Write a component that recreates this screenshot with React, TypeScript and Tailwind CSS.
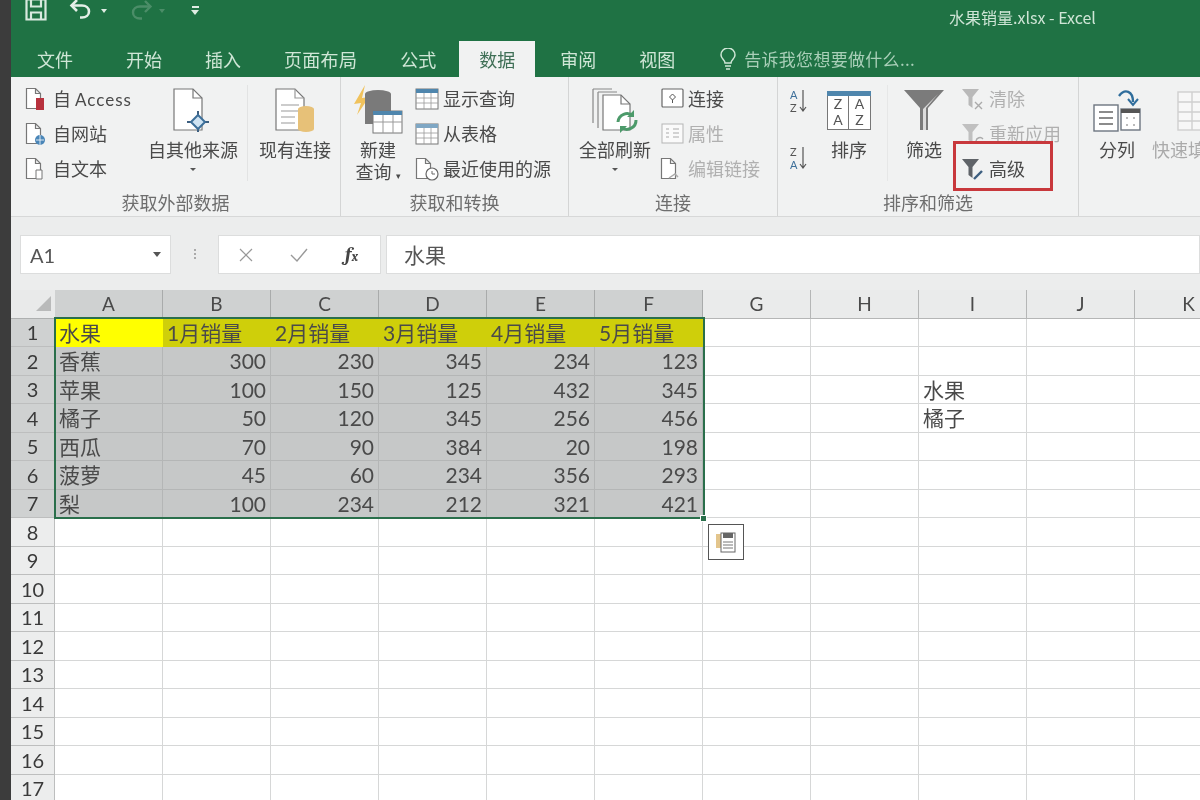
import React from "react";

const CJK = '"Noto Sans CJK SC", sans-serif';
const LATIN = 'Lato, "Noto Sans CJK SC", sans-serif';

const COLS = ["A", "B", "C", "D", "E", "F", "G", "H", "I", "J", "K"];
const TABLE: (string | number)[][] = [
  ["水果", "1月销量", "2月销量", "3月销量", "4月销量", "5月销量"],
  ["香蕉", 300, 230, 345, 234, 123],
  ["苹果", 100, 150, 125, 432, 345],
  ["橘子", 50, 120, 345, 256, 456],
  ["西瓜", 70, 90, 384, 20, 198],
  ["菠萝", 45, 60, 234, 356, 293],
  ["梨", 100, 234, 212, 321, 421],
];
const ROWS = Array.from({ length: 17 }, (_, i) => i + 1);
// criteria range over in column I
const CRITERIA: Record<number, string> = { 3: "水果", 4: "橘子" };

const DOC = "M1.5 1.5h9l5 5v15h-14z M10.5 1.5v5h5";

function DocIcon({ children }: { children?: React.ReactNode }) {
  return (
    <svg width="24" height="24" viewBox="0 0 24 24" fill="none">
      <path d={DOC} fill="#fff" stroke="#777" strokeWidth="1.2" />
      {children}
    </svg>
  );
}

function TableIcon({ fill }: { fill: string }) {
  return (
    <svg width="24" height="24" viewBox="0 0 24 24" fill="none">
      <rect x="1" y="2" width="22" height="20" fill="#fff" stroke="#777" />
      <rect x="1" y="2" width="22" height="4" fill={fill} />
      <path d="M1 11h22M1 16h22M9 6v16M16 6v16" stroke="#999" strokeWidth="0.8" />
    </svg>
  );
}

function SmallFunnel({ color, children }: { color: string; children?: React.ReactNode }) {
  return (
    <svg width="24" height="24" viewBox="0 0 24 24" fill="none">
      <path d="M1 2h17l-6.5 8v11l-4-3v-8z" fill={color} />
      {children}
    </svg>
  );
}

function SmallItem({
  icon,
  muted,
  children,
}: {
  icon: React.ReactNode;
  muted?: boolean;
  children: React.ReactNode;
}) {
  return (
    <div className={`flex h-[35px] items-center gap-1 text-[18px] whitespace-nowrap ${muted ? "text-[#b0b0b0]" : "text-[#4a4a4a]"}`}>
      <span className="flex w-6 shrink-0 justify-center">{icon}</span>
      {children}
    </div>
  );
}

function BigButton({
  icon,
  lines,
  caret,
  className = "",
}: {
  icon: React.ReactNode;
  lines: React.ReactNode[];
  caret?: boolean;
  className?: string;
}) {
  return (
    <div className={`flex shrink-0 flex-col items-center text-[18px] leading-[22px] whitespace-nowrap text-[#4a4a4a] ${className}`}>
      <div className="flex h-[56px] items-center justify-center">{icon}</div>
      {lines.map((l, i) => (
        <div key={i}>{l}</div>
      ))}
      {caret && <div className="mt-2 h-0 w-0 border-x-[3px] border-t-[3px] border-x-transparent border-t-[#555]" />}
    </div>
  );
}

function Group({ label, width, children }: { label: string; width: string; children: React.ReactNode }) {
  return (
    <div className={`flex shrink-0 flex-col border-r border-[#d4d5d5] ${width}`}>
      <div className="flex h-[112px] overflow-hidden pt-[5px]">{children}</div>
      <div className="flex h-[28px] items-center justify-center text-[18px] text-[#6e6e6e]">{label}</div>
    </div>
  );
}

function TitleBar() {
  return (
    <div className="relative flex h-[41px] items-start">
      <svg className="ml-[14px] -mt-[2px]" width="22" height="23" viewBox="0 0 22 23" fill="none" stroke="#d9eadf" strokeWidth="2.2">
        <path d="M1.5 1.5h19v20h-19z" />
        <path d="M6 1.5v7h10v-7M6 21.5v-7h10v7" />
      </svg>
      <svg className="ml-[22px] -mt-[1px]" width="24" height="22" viewBox="0 0 24 22" fill="none" stroke="#e4efe7" strokeWidth="2.6">
        <path d="M8 1 2.5 6.5 8 12" />
        <path d="M3 6.5h10c4 0 7 2.5 7 6s-3 6-7 6h-2" />
      </svg>
      <div className="mt-[9px] ml-[8px] h-0 w-0 border-x-[3px] border-t-[4px] border-x-transparent border-t-[#dfece3]" />
      <svg className="ml-[22px] mt-0" width="24" height="22" viewBox="0 0 24 22" fill="none" stroke="#4b8d68" strokeWidth="2.4">
        <path d="M16 1l5.5 5.5L16 12" />
        <path d="M21 6.5H11c-4 0-7 2.5-7 6s3 6 7 6h2" />
      </svg>
      <div className="mt-[9px] ml-[6px] h-0 w-0 border-x-[3px] border-t-[4px] border-x-transparent border-t-[#4b8d68]" />
      <div className="mt-[6px] ml-[26px] flex flex-col items-center gap-[2px]">
        <div className="h-[2px] w-[7px] bg-[#dfece3]" />
        <div className="h-0 w-0 border-x-[4px] border-t-[5px] border-x-transparent border-t-[#dfece3]" />
      </div>
      <div className="absolute top-[6px] left-[938px] text-[16px] leading-[22px] whitespace-nowrap text-[#cfe5d6]">
        水果销量.xlsx - Excel
      </div>
    </div>
  );
}

function Tabs() {
  return (
    <div className="flex h-[36px] items-center gap-[43px] pl-[26px] text-[18px] text-[#cfe6d6]">
      <span>文件</span>
      <span className="ml-[10px]">开始</span>
      <span>插入</span>
      <span className="tracking-[0.3px]">页面布局</span>
      <span>公式</span>
      <span className="-mx-5 flex h-[36px] items-center bg-[#f1f2f2] px-5 text-[#3f6f56]">数据</span>
      <span className="ml-[2px]">审阅</span>
      <span>视图</span>
      <span className="ml-[2px] flex items-center gap-2 text-[17px] tracking-[0.3px] text-[#a9cfb8]">
        <svg width="16" height="22" viewBox="0 0 16 22" fill="none" stroke="#cfe6d6" strokeWidth="1.5">
          <path d="M5 15c0-3-4-4-4-8a7 7 0 0 1 14 0c0 4-4 5-4 8z" />
          <path d="M5 18h6M6 21h4" />
        </svg>
        告诉我您想要做什么...
      </span>
    </div>
  );
}

function Ribbon() {
  return (
    <div className="relative flex h-[140px] border-b border-[#d7d8d8] bg-[#f1f2f2] text-[#4a4a4a]">
      <Group label="获取外部数据" width="w-[330px]">
        <div className="-mt-[1px] ml-[14px] w-[123px] shrink-0">
          <SmallItem
            icon={
              <DocIcon>
                <rect x="11" y="11" width="8" height="12" fill="#b8323e" />
              </DocIcon>
            }
          >
            <span>自 <span className="text-[17px] tracking-[1px]" style={{ fontFamily: LATIN }}>Access</span></span>
          </SmallItem>
          <SmallItem
            icon={
              <DocIcon>
                <circle cx="15" cy="18" r="5" fill="#4a86b8" />
                <path d="M11 18h8M15 13v10" stroke="#fff" strokeWidth="0.8" />
              </DocIcon>
            }
          >
            自网站
          </SmallItem>
          <SmallItem
            icon={
              <DocIcon>
                <path d="M11 13h6v9h-6z" fill="#fff" stroke="#777" />
              </DocIcon>
            }
          >
            自文本
          </SmallItem>
        </div>
        <BigButton
          className="w-[90px]"
          caret
          lines={["自其他来源"]}
          icon={
            <svg width="46" height="46" viewBox="0 0 46 46" fill="none">
              <path d="M4 2h19l9 9v32H4z" fill="#fff" stroke="#777" strokeWidth="1.2" />
              <path d="M23 2v9h9" stroke="#777" strokeWidth="1.2" />
              <path d="M28 24v5M28 41v4M21 35h-4M39 35h-4" stroke="#3d5f80" strokeWidth="2" />
              <path d="M28 28l7 7-7 7-7-7z" fill="#cfe3f2" stroke="#3d6f99" strokeWidth="2" />
            </svg>
          }
        />
        <div className="mt-[3px] ml-[9px] h-[96px] w-px bg-[#e2e3e3]" />
        <BigButton
          className="ml-[11px] w-[72px]"
          lines={["现有连接"]}
          icon={
            <svg width="46" height="46" viewBox="0 0 46 46" fill="none">
              <path d="M4 2h19l9 9v32H4z" fill="#fff" stroke="#777" strokeWidth="1.2" />
              <path d="M23 2v9h9M9 18h18M9 24h18M9 30h14M9 36h14" stroke="#999" strokeWidth="1.2" />
              <path d="M26 22a8 3 0 0 1 16 0v20a8 3 0 0 1-16 0z" fill="#e7c178" />
            </svg>
          }
        />
      </Group>

      <Group label="获取和转换" width="w-[228px]">
        <BigButton
          className="ml-[11px] w-[52px]"
          lines={["新建", <span className="whitespace-nowrap">查询 <span className="text-[9px]">▾</span></span>]}
          icon={
            <svg width="52" height="52" viewBox="0 0 52 52" fill="none">
              <path d="M13 1 2 20l7-1-4 12 12-18-7 1z" fill="#f0c25c" />
              <path d="M13 10a13 4 0 0 1 26 0v30H13z" fill="#7a7a7a" />
              <rect x="21" y="27" width="29" height="22" fill="#fff" stroke="#777" />
              <rect x="21" y="27" width="29" height="4" fill="#4f86ad" />
              <path d="M21 38h29M31 31v18M41 31v18" stroke="#999" />
            </svg>
          }
        />
        <div className="-mt-[1px] ml-[11px] shrink-0">
          <SmallItem icon={<TableIcon fill="#4f86ad" />}>显示查询</SmallItem>
          <SmallItem icon={<TableIcon fill="#7fa7c4" />}>从表格</SmallItem>
          <SmallItem
            icon={
              <DocIcon>
                <circle cx="17" cy="17" r="6" fill="#fff" stroke="#666" strokeWidth="1.2" />
                <path d="M17 14v3h3" stroke="#666" />
              </DocIcon>
            }
          >
            最近使用的源
          </SmallItem>
        </div>
      </Group>

      <Group label="连接" width="w-[209px]">
        <BigButton
          className="ml-[10px] w-[72px]"
          caret
          lines={["全部刷新"]}
          icon={
            <svg width="48" height="48" viewBox="0 0 48 48" fill="none">
              <path d="M2 3h19M2 3v34M7 6h19M7 6v36" stroke="#888" strokeWidth="1.2" />
              <path d="M12 9h18l9 9v26H12z" fill="#fff" stroke="#777" strokeWidth="1.2" />
              <path d="M30 9v9h9" stroke="#777" strokeWidth="1.2" />
              <path d="M27 36a9 9 0 0 1 15-6M45 34a9 9 0 0 1-15 7" stroke="#4c9a6a" strokeWidth="3" />
              <path d="M43 24v7h-7M29 47v-7h7" fill="#4c9a6a" />
            </svg>
          }
        />
        <div className="-mt-[1px] ml-[9px] shrink-0">
          <SmallItem
            icon={
              <svg width="23" height="21" viewBox="0 0 23 21" fill="none">
                <rect x="1" y="1" width="21" height="18" rx="1" fill="#fff" stroke="#666" strokeWidth="1.2" />
                <path d="M11.5 6l3 3-3 3-3-3zM11.5 12v3" stroke="#555" />
              </svg>
            }
          >
            连接
          </SmallItem>
          <SmallItem
            muted
            icon={
              <svg width="23" height="21" viewBox="0 0 23 21" fill="none">
                <rect x="1" y="1" width="21" height="19" fill="#fafafa" stroke="#b5b5b5" />
                <path d="M5 6h3M5 10h3M5 14h3M12 6h6M12 10h6M12 14h6" stroke="#aaa" />
              </svg>
            }
          >
            属性
          </SmallItem>
          <SmallItem
            muted
            icon={
              <DocIcon>
                <path d="M9 21l6-4 3 3" stroke="#aaa" strokeWidth="1.5" />
              </DocIcon>
            }
          >
            编辑链接
          </SmallItem>
        </div>
      </Group>

      <Group label="排序和筛选" width="w-[301px]">
        <div className="ml-[12px] flex w-[24px] shrink-0 flex-col gap-[31px] pt-[6px]" style={{ fontFamily: LATIN }}>
          <div className="flex items-center gap-[2px]">
            <div className="flex flex-col text-[11px] leading-[13px] text-[#3d6f99]">
              <span>A</span>
              <span className="text-[#555]">Z</span>
            </div>
            <svg width="8" height="24" viewBox="0 0 8 24" fill="none" stroke="#555" strokeWidth="1.2">
              <path d="M4 1v21M1 18l3 4 3-4" />
            </svg>
          </div>
          <div className="flex items-center gap-[2px]">
            <div className="flex flex-col text-[11px] leading-[13px] text-[#555]">
              <span>Z</span>
              <span className="text-[#3d6f99]">A</span>
            </div>
            <svg width="8" height="24" viewBox="0 0 8 24" fill="none" stroke="#555" strokeWidth="1.2">
              <path d="M4 1v21M1 18l3 4 3-4" />
            </svg>
          </div>
        </div>
        <BigButton
          className="ml-[12px] w-[46px]"
          lines={["排序"]}
          icon={
            <div className="relative flex flex-col">
              <div className="h-[5px] w-[44px] bg-[#4f86ad]" />
              <div
                className="grid h-[34px] w-[44px] grid-cols-2 border border-t-0 border-[#777] bg-white text-center text-[14px] leading-[16px] text-[#555]"
                style={{ fontFamily: LATIN }}
              >
                <div className="border-r border-[#777]">Z<br />A</div>
                <div>A<br />Z</div>
              </div>
            </div>
          }
        />
        <div className="mt-[3px] ml-[15px] h-[96px] w-px bg-[#e6e7e7]" />
        <BigButton
          className="ml-[15px] w-[42px]"
          lines={["筛选"]}
          icon={
            <svg width="42" height="42" viewBox="0 0 42 42" fill="none">
              <path d="M1 1h40L25 19v22h-8V19z" fill="#7b7b7b" />
              <path d="M20 20v21h3V19l12-14z" fill="#dcdcdc" />
            </svg>
          }
        />
        <div className="-mt-[1px] ml-[16px] shrink-0">
          <SmallItem
            muted
            icon={
              <SmallFunnel color="#b9b9b9">
                <path d="M14 15l7 7M21 15l-7 7" stroke="#aaa" strokeWidth="1.4" />
              </SmallFunnel>
            }
          >
            清除
          </SmallItem>
          <SmallItem
            muted
            icon={
              <SmallFunnel color="#c0c0c0">
                <path d="M15 19a4 4 0 0 1 7-2" stroke="#aaa" strokeWidth="1.4" />
              </SmallFunnel>
            }
          >
            重新应用
          </SmallItem>
          <SmallItem
            icon={
              <SmallFunnel color="#5f6368">
                <path d="M13 22l8-8" stroke="#3d5f80" strokeWidth="2.4" />
              </SmallFunnel>
            }
          >
            高级
          </SmallItem>
        </div>
      </Group>

      <div className="flex min-w-0 flex-1 overflow-hidden pt-[5px]">
        <BigButton
          className="ml-[15px] w-[46px]"
          lines={["分列"]}
          icon={
            <svg width="48" height="44" viewBox="0 0 48 44" fill="none">
              <path d="M26 8c6-8 14-5 14 6" stroke="#2f6d9c" strokeWidth="2.4" />
              <path d="M35 11l5 6 5-6" stroke="#2f6d9c" strokeWidth="2" />
              <rect x="1" y="17" width="24" height="26" fill="#fff" stroke="#6d7680" strokeWidth="1.4" />
              <path d="M6 24h14M6 30h14M6 36h14" stroke="#666" strokeWidth="1.4" />
              <rect x="28" y="21" width="19" height="21" fill="#fff" stroke="#6d7680" strokeWidth="1.4" />
              <rect x="28" y="21" width="19" height="4" fill="#555" />
              <path d="M33 30h2M40 30h2M33 37h2M40 37h2" stroke="#777" />
            </svg>
          }
        />
        <BigButton
          className="ml-[12px] w-[72px]"
          lines={[<span className="text-[#aaa]">快速填充</span>]}
          icon={
            <svg className="ml-[22px]" width="44" height="44" viewBox="0 0 44 44" fill="none" stroke="#cfcfcf" strokeWidth="1.4">
              <rect x="1" y="4" width="42" height="38" fill="#f7f7f7" />
              <path d="M1 14h42M1 24h42M1 33h42M15 4v38M29 4v38" />
            </svg>
          }
        />
      </div>

      <div className="absolute top-[64px] left-[942px] h-[50px] w-[100px] border-[3px] border-[#c8383c]" />
    </div>
  );
}

function FormulaBar() {
  return (
    <div className="flex h-[73px] items-start gap-0 bg-[#eceded] pt-[18px] pl-[9px]">
      <div className="flex h-[39px] w-[151px] items-center justify-between border border-[#dcdddd] bg-white pr-[9px] pl-[9px] text-[20px] text-[#555]" style={{ fontFamily: LATIN }}>
        A1
        <div className="h-0 w-0 border-x-[4px] border-t-[5px] border-x-transparent border-t-[#555]" />
      </div>
      <div className="mt-[14px] mr-[22px] ml-[23px] flex flex-col gap-[2px]">
        <div className="h-[2px] w-[2px] bg-[#aaa]" />
        <div className="h-[2px] w-[2px] bg-[#aaa]" />
        <div className="h-[2px] w-[2px] bg-[#aaa]" />
      </div>
      <div className="flex h-[39px] w-[163px] items-center border border-[#dcdddd] bg-white">
        <svg className="ml-[19px]" width="16" height="16" viewBox="0 0 16 16" stroke="#999" strokeWidth="1.2">
          <path d="M2 2l12 12M14 2 2 14" />
        </svg>
        <svg className="ml-[35px]" width="20" height="16" viewBox="0 0 20 16" fill="none" stroke="#999" strokeWidth="1.4">
          <path d="M2 8l6 6L18 2" />
        </svg>
        <span className="ml-[36px] font-serif text-[20px] font-bold text-[#444] italic">
          f<span className="text-[13px]">x</span>
        </span>
      </div>
      <div className="ml-[5px] flex h-[39px] flex-1 items-center border border-[#dcdddd] bg-white pl-[17px] text-[21px] text-[#555]">
        水果
      </div>
    </div>
  );
}

function Sheet() {
  return (
    <div className="relative min-h-0 flex-1 overflow-hidden bg-white" style={{ fontFamily: LATIN }}>
      <div className="grid w-[1232px] grid-cols-[44px_repeat(11,108px)] auto-rows-[28.5px] text-[21px] text-[#4a4a4a]">
        <div className="flex items-center justify-end border-b border-[#aeb0b0] bg-[#e9eaea] pr-[4px]">
          <div className="h-0 w-0 border-b-[15px] border-l-[15px] border-b-[#b9baba] border-l-transparent" />
        </div>
        {COLS.map((c, i) => (
          <div
            key={c}
            className={`flex items-center justify-center border-r border-b text-[19px] ${i < 6 ? "border-[#a9abab] bg-[#cfd1d1]" : "border-[#b5b6b6] bg-[#eaebeb]"}`}
          >
            {c}
          </div>
        ))}
        {ROWS.map((r) => {
          const row = TABLE[r - 1];
          return (
            <React.Fragment key={r}>
              <div className={`flex items-center justify-center border-r border-b border-[#bdbebe] text-[20px] text-[#3a3a3a] ${row ? "bg-[#cfd1d1]" : "bg-[#eceded]"}`}>
                {r}
              </div>
              {COLS.map((c, i) => {
                const v = i === 8 ? CRITERIA[r] : row?.[i];
                let tone = "border-[#d6d7d7] bg-white";
                if (row && i < 6) {
                  tone = "border-[#b4b6b6] bg-[#c6c8c8]";
                  if (r === 1) tone = i === 0 ? "border-[#ffff00] bg-[#ffff00]" : "border-[#cfcf0a] bg-[#cfcf0a]";
                }
                return (
                  <div
                    key={c}
                    className={`flex items-center overflow-visible border-r border-b px-1 whitespace-nowrap ${tone} ${typeof v === "number" ? "justify-end" : ""}`}
                  >
                    {v}
                  </div>
                );
              })}
            </React.Fragment>
          );
        })}
      </div>

      <div className="absolute top-[27px] left-[43px] h-[202px] w-[651px] border-2 border-[#2a6f4b]" />
      <div className="absolute top-[225px] left-[689px] h-[7px] w-[7px] border border-white bg-[#2a6f4b]" />
      <div className="absolute top-[234px] left-[697px] flex h-[36px] w-[36px] items-center justify-center border border-[#555] bg-white">
        <svg width="22" height="24" viewBox="0 0 22 24" fill="none">
          <path d="M1 4h6v14H1z" fill="#e3c58c" />
          <rect x="6" y="3" width="14" height="19" fill="#fff" stroke="#666" />
          <rect x="8" y="3" width="10" height="5" fill="#666" />
          <path d="M8 12h10M8 15h10M8 18h10" stroke="#777" />
        </svg>
      </div>
    </div>
  );
}

export default function App() {
  return (
    <div className="flex h-[800px] w-[1200px] overflow-hidden bg-white blur-[0.5px]" style={{ fontFamily: CJK }}>
      <div className="w-[11px] shrink-0 bg-[#3c3c3c]" />
      <div className="flex min-w-0 flex-1 flex-col">
        <div className="bg-[#1f7244]">
          <TitleBar />
          <Tabs />
        </div>
        <Ribbon />
        <FormulaBar />
        <Sheet />
      </div>
    </div>
  );
}
